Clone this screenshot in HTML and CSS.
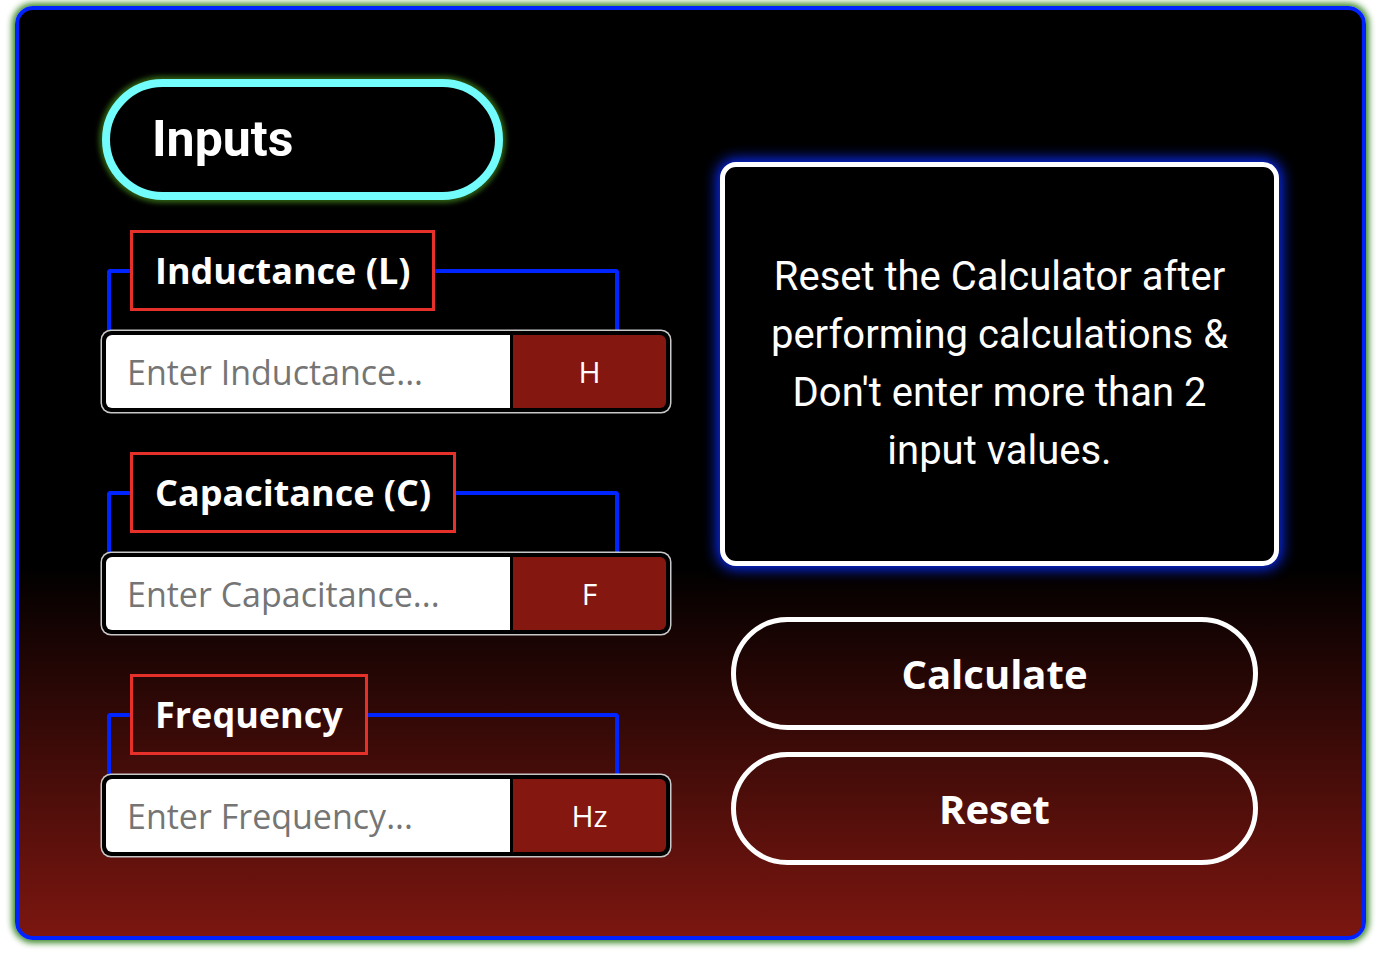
FILE: index.html
```html
<!DOCTYPE html>
<html lang="en">
<head>
  <meta charset="UTF-8">
  <title>LC Resonance Calculator</title>
  <link rel="stylesheet" href="styles.css">
</head>
<body>
  <div class="calculator">
    <div class="inputs-col">
      <div class="inputs-title">Inputs</div>

      <fieldset class="field">
        <legend>Inductance (L)</legend>
      </fieldset>
      <div class="input-group">
        <input type="text" placeholder="Enter Inductance...">
        <span class="unit">H</span>
      </div>

      <fieldset class="field">
        <legend>Capacitance (C)</legend>
      </fieldset>
      <div class="input-group">
        <input type="text" placeholder="Enter Capacitance...">
        <span class="unit">F</span>
      </div>

      <fieldset class="field">
        <legend>Frequency</legend>
      </fieldset>
      <div class="input-group">
        <input type="text" placeholder="Enter Frequency...">
        <span class="unit">Hz</span>
      </div>
    </div>

    <div class="side-col">
      <div class="info-box">
        Reset the Calculator after performing calculations &amp; Don't enter more than 2 input values.
      </div>
      <button class="btn">Calculate</button>
      <button class="btn">Reset</button>
    </div>
  </div>
</body>
</html>
```

FILE: styles.css
```css
body {
  margin: 0;
  padding: 6px 14px 14px 15px;
  background-color: #fff;
  font-family: 'Open Sans', sans-serif;
}

.calculator {
  box-sizing: border-box;
  width: 1351px;
  height: 934px;
  border: 4px solid #0022ff;
  border-radius: 18px;
  box-shadow: 0 0 6px 3px #3f8a2c;
  background: linear-gradient(to bottom, #000 60%, #7c1610 100%);
  padding: 69px 0 0 82px;
  display: flex;
  gap: 49px;
}

.inputs-col {
  width: 570px;
}

.inputs-title {
  box-sizing: border-box;
  width: 401px;
  height: 121px;
  margin-left: 1px;
  margin-bottom: 30px;
  border: 8px solid #72fcfc;
  border-radius: 61px;
  box-shadow: 0 0 5px 3px #2f5f14;
  background-color: #000;
  color: #fff;
  font-family: Roboto, sans-serif;
  font-weight: bold;
  font-size: 50px;
  line-height: 105px;
  padding-left: 42px;
}

.field {
  box-sizing: border-box;
  width: 512px;
  margin: 0 0 0 6px;
  padding: 0 0 20px 19px;
  border: 4px solid #0024ff;
  border-bottom: none;
  border-radius: 4px 4px 0 0;
}

.field legend {
  border: 3px solid #e6302a;
  padding: 0 22px;
  color: #fff;
  font-weight: bold;
  font-size: 36px;
  line-height: 75px;
}

.input-group {
  display: flex;
  gap: 3px;
  width: 568px;
  margin: 0 0 40px 1px;
  padding: 4px;
  box-sizing: border-box;
  height: 81px;
  background-color: #000;
  border-radius: 9px;
  box-shadow: 0 0 0 1.5px #c8c8c8;
}

.input-group input {
  width: 404px;
  box-sizing: border-box;
  border: none;
  outline: none;
  border-radius: 6px 0 0 6px;
  padding: 0 0 0 21px;
  font-family: 'Open Sans', sans-serif;
  font-size: 34px;
  background-color: #fff;
}

.input-group input::placeholder {
  color: #757575;
}

.unit {
  flex: 1;
  display: flex;
  align-items: center;
  justify-content: center;
  background-color: #84170f;
  border-radius: 0 6px 6px 0;
  color: #fff;
  font-size: 30px;
}

.side-col {
  width: 559px;
  margin-top: 83px;
  display: flex;
  flex-direction: column;
}

.info-box {
  box-sizing: border-box;
  height: 404px;
  border: 5px solid #fff;
  border-radius: 16px;
  box-shadow: 0 0 14px 3px #0a2cff;
  background-color: #000;
  color: #fff;
  font-family: Roboto, sans-serif;
  font-size: 40px;
  line-height: 58px;
  text-align: center;
  display: flex;
  align-items: center;
  justify-content: center;
  padding: 0 30px;
  margin-bottom: 51px;
}

.btn {
  box-sizing: border-box;
  width: 527px;
  height: 113px;
  margin: 0 0 22px 11px;
  border: 5px solid #fff;
  border-radius: 57px;
  background: transparent;
  color: #fff;
  font-family: 'Open Sans', sans-serif;
  font-weight: bold;
  font-size: 40px;
  cursor: pointer;
}
```
